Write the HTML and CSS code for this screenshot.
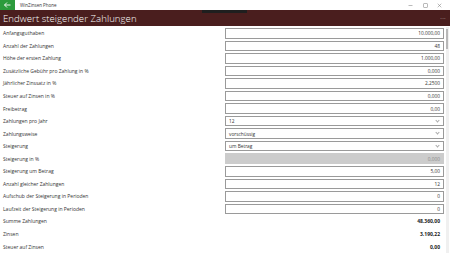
FILE: index.html
```html
<!DOCTYPE html>
<html lang="de">
<head>
  <meta charset="UTF-8" />
  <title>WinZinsen Phone</title>
  <link rel="stylesheet" href="styles.css">
</head>
<body>
  <div class="titlebar">
    <div class="back">
      <svg width="7" height="6" viewBox="0 0 7 6"><path d="M0.5 3H6.5M3 0.5L0.5 3L3 5.5" stroke="#fff" stroke-width="0.9" fill="none"/></svg>
    </div>
    <span class="appname">WinZinsen Phone</span>
    <div class="controls">
      <span class="ctl"><svg width="5" height="5" viewBox="0 0 5 5"><path d="M0.5 2.5H4.5" stroke="#777" stroke-width="0.5"/></svg></span>
      <span class="ctl"><svg width="5" height="5" viewBox="0 0 5 5"><rect x="0.75" y="0.75" width="3.5" height="3.5" stroke="#777" stroke-width="0.5" fill="none"/></svg></span>
      <span class="ctl"><svg width="5" height="5" viewBox="0 0 5 5"><path d="M0.7 0.7L4.3 4.3M4.3 0.7L0.7 4.3" stroke="#777" stroke-width="0.5"/></svg></span>
    </div>
  </div>

  <div class="header">
    <div class="handle"></div>
    <h1>Endwert steigender Zahlungen</h1>
    <span class="more">&middot;&middot;&middot;</span>
  </div>

  <div class="main">
    <div class="form">
      <label>Anfangsguthaben</label><div class="field">10.000,00</div>
      <label>Anzahl der Zahlungen</label><div class="field">48</div>
      <label>Höhe der ersten Zahlung</label><div class="field">1.000,00</div>
      <label>Zusätzliche Gebühr pro Zahlung in %</label><div class="field">0,000</div>
      <label>Jährlicher Zinssatz in %</label><div class="field">2,2500</div>
      <label>Steuer auf Zinsen in %</label><div class="field">0,000</div>
      <label>Freibetrag</label><div class="field">0,00</div>
      <label>Zahlungen pro Jahr</label><div class="field select"><span>12</span><i class="chev"></i></div>
      <label>Zahlungsweise</label><div class="field select"><span>vorschüssig</span><i class="chev"></i></div>
      <label>Steigerung</label><div class="field select"><span>um Betrag</span><i class="chev"></i></div>
      <label>Steigerung in %</label><div class="field disabled">0,000</div>
      <label>Steigerung um Betrag</label><div class="field">5,00</div>
      <label>Anzahl gleicher Zahlungen</label><div class="field">12</div>
      <label>Aufschub der Steigerung in Perioden</label><div class="field">0</div>
      <label>Laufzeit der Steigerung in Perioden</label><div class="field">0</div>
      <label>Summe Zahlungen</label><div class="result">48.360,00</div>
      <label>Zinsen</label><div class="result">3.190,22</div>
      <label>Steuer auf Zinsen</label><div class="result">0,00</div>
    </div>
    <div class="scrollbar"><div class="thumb"></div></div>
  </div>
</body>
</html>
```

FILE: styles.css
```css
body {
  margin: 0;
  width: 450px;
  height: 253px;
  overflow: hidden;
  background: #fff;
  font-family: "Open Sans", "Noto Sans", sans-serif;
  color: #222;
}
.titlebar {
  display: flex;
  align-items: center;
  height: 10px;
  background: #fff;
}
.back {
  width: 15px;
  height: 10px;
  background: #2c9b3c;
  display: flex;
  align-items: center;
  justify-content: center;
}
.appname {
  font-size: 4.5px;
  margin-left: 5px;
  color: #333;
}
.controls {
  margin-left: auto;
  display: flex;
  margin-right: 3px;
}
.ctl {
  width: 14.5px;
  display: flex;
  justify-content: center;
  align-items: center;
}
.header {
  position: relative;
  display: flex;
  align-items: center;
  height: 16px;
  background: #4a1e1e;
  color: #fff;
  padding: 0 4px 0 3px;
}
.handle {
  position: absolute;
  top: 0;
  left: 202px;
  width: 45px;
  height: 3px;
  background: #1f1f1f;
}
.header h1 {
  margin: 0;
  font-size: 9.6px;
  font-weight: 300;
  letter-spacing: 0.05px;
}
.more {
  margin-left: auto;
  font-size: 6px;
  letter-spacing: 0.3px;
  color: #ccc;
}
.main {
  display: flex;
}
.form {
  flex: 1;
  display: grid;
  grid-template-columns: 222px 219px;
  grid-auto-rows: 12.55px;
  align-items: center;
  padding: 1px 0 0 3px;
}
.form label {
  font-size: 5px;
  color: #333;
}
.field {
  height: 8.5px;
  border: 0.8px solid #9a9a9a;
  font-size: 4.8px;
  display: flex;
  align-items: center;
  justify-content: flex-end;
  padding: 0 3px;
  color: #333;
}
.field.select {
  justify-content: space-between;
}
.chev {
  width: 2px;
  height: 2px;
  border-right: 0.5px solid #aaa;
  border-bottom: 0.5px solid #aaa;
  transform: rotate(45deg);
  margin: 0 1.5px 1.5px 0;
}
.field.disabled {
  background: #cccccc;
  border-color: #cccccc;
  color: #888;
}
.result {
  text-align: right;
  font-size: 5px;
  font-weight: bold;
  padding-right: 4px;
}
.scrollbar {
  width: 3px;
  margin: 1px 1px 0 2px;
  background: #f0f0f0;
}
.thumb {
  width: 2px;
  height: 20px;
  margin-top: 2px;
  background: #b8b8b8;
}
```
